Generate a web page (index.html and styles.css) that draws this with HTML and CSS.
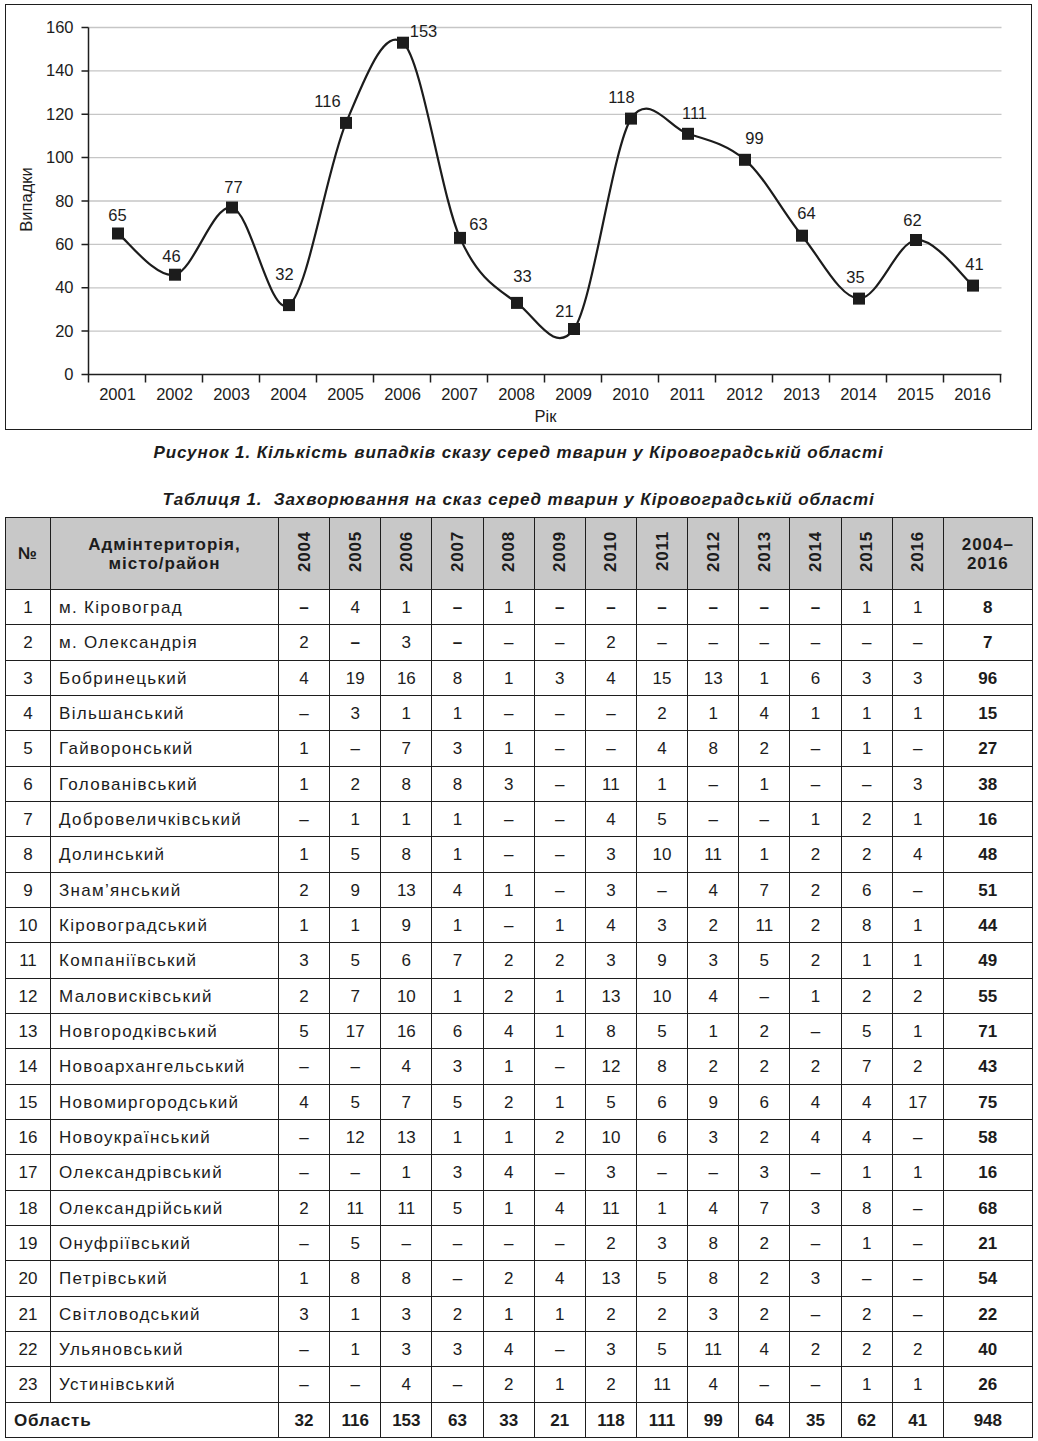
FILE: index.html
```html
<!DOCTYPE html>
<html lang="uk">
<head>
<meta charset="utf-8">
<title>Сказ серед тварин у Кіровоградській області</title>
<link rel="stylesheet" href="styles.css">
</head>
<body>
<div class="page">
  <div class="chart">
    <svg class="chart-svg" width="1023" height="422" viewBox="6.5 5.5 1023 422">
      <g class="grid">
        <line x1="89" y1="28" x2="1002" y2="28"/>
        <line x1="89" y1="71.4" x2="1002" y2="71.4"/>
        <line x1="89" y1="114.8" x2="1002" y2="114.8"/>
        <line x1="89" y1="158.1" x2="1002" y2="158.1"/>
        <line x1="89" y1="201.5" x2="1002" y2="201.5"/>
        <line x1="89" y1="244.9" x2="1002" y2="244.9"/>
        <line x1="89" y1="288.3" x2="1002" y2="288.3"/>
        <line x1="89" y1="331.6" x2="1002" y2="331.6"/>
      </g>
      <path class="axis" d="M89,28 V375 H1002 M82,28 H89 M82,71.4 H89 M82,114.8 H89 M82,158.1 H89 M82,201.5 H89 M82,244.9 H89 M82,288.3 H89 M82,331.6 H89 M82,375 H89 M89,375 V383 M146,375 V383 M203,375 V383 M260,375 V383 M317,375 V383 M374,375 V383 M431,375 V383 M488,375 V383 M545,375 V383 M602,375 V383 M659,375 V383 M716,375 V383 M773,375 V383 M830,375 V383 M887,375 V383 M944,375 V383 M1001,375 V383"/>
      <g class="ylab">
        <text x="74" y="33.5">160</text>
        <text x="74" y="76.9">140</text>
        <text x="74" y="120.3">120</text>
        <text x="74" y="163.6">100</text>
        <text x="74" y="207">80</text>
        <text x="74" y="250.4">60</text>
        <text x="74" y="293.8">40</text>
        <text x="74" y="337.1">20</text>
        <text x="74" y="380.5">0</text>
      </g>
      <g class="xlab">
        <text x="118" y="400">2001</text>
        <text x="175" y="400">2002</text>
        <text x="232" y="400">2003</text>
        <text x="289" y="400">2004</text>
        <text x="346" y="400">2005</text>
        <text x="403" y="400">2006</text>
        <text x="460" y="400">2007</text>
        <text x="517" y="400">2008</text>
        <text x="574" y="400">2009</text>
        <text x="631" y="400">2010</text>
        <text x="688" y="400">2011</text>
        <text x="745" y="400">2012</text>
        <text x="802" y="400">2013</text>
        <text x="859" y="400">2014</text>
        <text x="916" y="400">2015</text>
        <text x="973" y="400">2016</text>
      </g>
      <text class="axis-title" x="546" y="422">Рік</text>
      <text class="axis-title" transform="translate(32,200) rotate(-90)" x="0" y="0">Випадки</text>
      <path class="curve" d="M118.5,234 C128,240.87 156.5,279.53 175.5,275.2 C194.5,270.87 213.5,203.93 232.5,208 C251.5,212.07 270.5,318.7 289.5,305.6 C308.5,292.5 327.5,168.13 346.5,123.4 C365.5,78.67 384.5,27.03 403.5,43.2 C422.5,59.37 441.5,196.03 460.5,238.4 C479.5,280.77 498.5,289.22 517.5,303.4 C536.5,317.58 555.5,356.22 574.5,329.5 C593.5,302.78 612.5,150.63 631.5,119.1 C650.5,92 669.5,128.43 688.5,134.3 C707.5,140.17 726.5,144.32 745.5,160.3 C764.5,176.28 783.5,213.07 802.5,236.2 C821.5,259.33 840.5,298.38 859.5,299.1 C878.5,299.82 897.5,242.67 916.5,240.5 C935.5,238.33 964,278.5 973.5,286.1"/>
      <g class="marker">
        <rect x="112.5" y="228" width="12" height="12"/>
        <rect x="169.5" y="269.2" width="12" height="12"/>
        <rect x="226.5" y="202" width="12" height="12"/>
        <rect x="283.5" y="299.6" width="12" height="12"/>
        <rect x="340.5" y="117.4" width="12" height="12"/>
        <rect x="397.5" y="37.2" width="12" height="12"/>
        <rect x="454.5" y="232.4" width="12" height="12"/>
        <rect x="511.5" y="297.4" width="12" height="12"/>
        <rect x="568.5" y="323.5" width="12" height="12"/>
        <rect x="625.5" y="113.1" width="12" height="12"/>
        <rect x="682.5" y="128.3" width="12" height="12"/>
        <rect x="739.5" y="154.3" width="12" height="12"/>
        <rect x="796.5" y="230.2" width="12" height="12"/>
        <rect x="853.5" y="293.1" width="12" height="12"/>
        <rect x="910.5" y="234.5" width="12" height="12"/>
        <rect x="967.5" y="280.1" width="12" height="12"/>
      </g>
      <g class="vlab">
        <text x="118" y="221.5">65</text>
        <text x="172" y="262.5">46</text>
        <text x="234" y="193.5">77</text>
        <text x="285" y="280.5">32</text>
        <text x="328" y="107.5">116</text>
        <text x="424" y="37.5">153</text>
        <text x="479" y="230.5">63</text>
        <text x="523" y="282.5">33</text>
        <text x="565" y="317.5">21</text>
        <text x="622" y="103.5">118</text>
        <text x="695" y="119.5">111</text>
        <text x="755" y="144.5">99</text>
        <text x="807" y="219.5">64</text>
        <text x="856" y="283.5">35</text>
        <text x="913" y="226.5">62</text>
        <text x="975" y="270.5">41</text>
      </g>
    </svg>
  </div>

  <p class="fig-caption">Рисунок 1. Кількість випадків сказу серед тварин у Кіровоградській області</p>
  <p class="tbl-caption">Таблиця 1.&nbsp; Захворювання на сказ серед тварин у Кіровоградській області</p>

  <table class="data">
    <colgroup>
      <col class="c-n"><col class="c-name">
      <col class="c-y"><col class="c-y"><col class="c-y"><col class="c-y"><col class="c-y"><col class="c-y"><col class="c-y"><col class="c-y"><col class="c-y"><col class="c-y"><col class="c-y"><col class="c-y"><col class="c-y">
      <col class="c-tot">
    </colgroup>
    <thead>
      <tr>
        <th>№</th>
        <th>Адмінтериторія,<br>місто/район</th>
        <th class="yr"><span>2004</span></th>
        <th class="yr"><span>2005</span></th>
        <th class="yr"><span>2006</span></th>
        <th class="yr"><span>2007</span></th>
        <th class="yr"><span>2008</span></th>
        <th class="yr"><span>2009</span></th>
        <th class="yr"><span>2010</span></th>
        <th class="yr"><span>2011</span></th>
        <th class="yr"><span>2012</span></th>
        <th class="yr"><span>2013</span></th>
        <th class="yr"><span>2014</span></th>
        <th class="yr"><span>2015</span></th>
        <th class="yr"><span>2016</span></th>
        <th>2004–<br>2016</th>
      </tr>
    </thead>
    <tbody>
      <tr><td>1</td><td class="name">м. Кіровоград</td><td class="hd">–</td><td>4</td><td>1</td><td class="hd">–</td><td>1</td><td class="hd">–</td><td class="hd">–</td><td class="hd">–</td><td class="hd">–</td><td class="hd">–</td><td class="hd">–</td><td>1</td><td>1</td><td class="tot">8</td></tr>
      <tr><td>2</td><td class="name">м. Олександрія</td><td>2</td><td class="hd">–</td><td>3</td><td class="hd">–</td><td>–</td><td>–</td><td>2</td><td>–</td><td>–</td><td>–</td><td>–</td><td>–</td><td>–</td><td class="tot">7</td></tr>
      <tr><td>3</td><td class="name">Бобринецький</td><td>4</td><td>19</td><td>16</td><td>8</td><td>1</td><td>3</td><td>4</td><td>15</td><td>13</td><td>1</td><td>6</td><td>3</td><td>3</td><td class="tot">96</td></tr>
      <tr><td>4</td><td class="name">Вільшанський</td><td>–</td><td>3</td><td>1</td><td>1</td><td>–</td><td>–</td><td>–</td><td>2</td><td>1</td><td>4</td><td>1</td><td>1</td><td>1</td><td class="tot">15</td></tr>
      <tr><td>5</td><td class="name">Гайворонський</td><td>1</td><td>–</td><td>7</td><td>3</td><td>1</td><td>–</td><td>–</td><td>4</td><td>8</td><td>2</td><td>–</td><td>1</td><td>–</td><td class="tot">27</td></tr>
      <tr><td>6</td><td class="name">Голованівський</td><td>1</td><td>2</td><td>8</td><td>8</td><td>3</td><td>–</td><td>11</td><td>1</td><td>–</td><td>1</td><td>–</td><td>–</td><td>3</td><td class="tot">38</td></tr>
      <tr><td>7</td><td class="name">Добровеличківський</td><td>–</td><td>1</td><td>1</td><td>1</td><td>–</td><td>–</td><td>4</td><td>5</td><td>–</td><td>–</td><td>1</td><td>2</td><td>1</td><td class="tot">16</td></tr>
      <tr><td>8</td><td class="name">Долинський</td><td>1</td><td>5</td><td>8</td><td>1</td><td>–</td><td>–</td><td>3</td><td>10</td><td>11</td><td>1</td><td>2</td><td>2</td><td>4</td><td class="tot">48</td></tr>
      <tr><td>9</td><td class="name">Знам’янський</td><td>2</td><td>9</td><td>13</td><td>4</td><td>1</td><td>–</td><td>3</td><td>–</td><td>4</td><td>7</td><td>2</td><td>6</td><td>–</td><td class="tot">51</td></tr>
      <tr><td>10</td><td class="name">Кіровоградський</td><td>1</td><td>1</td><td>9</td><td>1</td><td>–</td><td>1</td><td>4</td><td>3</td><td>2</td><td>11</td><td>2</td><td>8</td><td>1</td><td class="tot">44</td></tr>
      <tr><td>11</td><td class="name">Компаніївський</td><td>3</td><td>5</td><td>6</td><td>7</td><td>2</td><td>2</td><td>3</td><td>9</td><td>3</td><td>5</td><td>2</td><td>1</td><td>1</td><td class="tot">49</td></tr>
      <tr><td>12</td><td class="name">Маловисківський</td><td>2</td><td>7</td><td>10</td><td>1</td><td>2</td><td>1</td><td>13</td><td>10</td><td>4</td><td>–</td><td>1</td><td>2</td><td>2</td><td class="tot">55</td></tr>
      <tr><td>13</td><td class="name">Новгородківський</td><td>5</td><td>17</td><td>16</td><td>6</td><td>4</td><td>1</td><td>8</td><td>5</td><td>1</td><td>2</td><td>–</td><td>5</td><td>1</td><td class="tot">71</td></tr>
      <tr><td>14</td><td class="name">Новоархангельський</td><td>–</td><td>–</td><td>4</td><td>3</td><td>1</td><td>–</td><td>12</td><td>8</td><td>2</td><td>2</td><td>2</td><td>7</td><td>2</td><td class="tot">43</td></tr>
      <tr><td>15</td><td class="name">Новомиргородський</td><td>4</td><td>5</td><td>7</td><td>5</td><td>2</td><td>1</td><td>5</td><td>6</td><td>9</td><td>6</td><td>4</td><td>4</td><td>17</td><td class="tot">75</td></tr>
      <tr><td>16</td><td class="name">Новоукраїнський</td><td>–</td><td>12</td><td>13</td><td>1</td><td>1</td><td>2</td><td>10</td><td>6</td><td>3</td><td>2</td><td>4</td><td>4</td><td>–</td><td class="tot">58</td></tr>
      <tr><td>17</td><td class="name">Олександрівський</td><td>–</td><td>–</td><td>1</td><td>3</td><td>4</td><td>–</td><td>3</td><td>–</td><td>–</td><td>3</td><td>–</td><td>1</td><td>1</td><td class="tot">16</td></tr>
      <tr><td>18</td><td class="name">Олександрійський</td><td>2</td><td>11</td><td>11</td><td>5</td><td>1</td><td>4</td><td>11</td><td>1</td><td>4</td><td>7</td><td>3</td><td>8</td><td>–</td><td class="tot">68</td></tr>
      <tr><td>19</td><td class="name">Онуфріївський</td><td>–</td><td>5</td><td>–</td><td>–</td><td>–</td><td>–</td><td>2</td><td>3</td><td>8</td><td>2</td><td>–</td><td>1</td><td>–</td><td class="tot">21</td></tr>
      <tr><td>20</td><td class="name">Петрівський</td><td>1</td><td>8</td><td>8</td><td>–</td><td>2</td><td>4</td><td>13</td><td>5</td><td>8</td><td>2</td><td>3</td><td>–</td><td>–</td><td class="tot">54</td></tr>
      <tr><td>21</td><td class="name">Світловодський</td><td>3</td><td>1</td><td>3</td><td>2</td><td>1</td><td>1</td><td>2</td><td>2</td><td>3</td><td>2</td><td>–</td><td>2</td><td>–</td><td class="tot">22</td></tr>
      <tr><td>22</td><td class="name">Ульяновський</td><td>–</td><td>1</td><td>3</td><td>3</td><td>4</td><td>–</td><td>3</td><td>5</td><td>11</td><td>4</td><td>2</td><td>2</td><td>2</td><td class="tot">40</td></tr>
      <tr><td>23</td><td class="name">Устинівський</td><td>–</td><td>–</td><td>4</td><td>–</td><td>2</td><td>1</td><td>2</td><td>11</td><td>4</td><td>–</td><td>–</td><td>1</td><td>1</td><td class="tot">26</td></tr>
      <tr class="sum"><td colspan="2" class="name region">Область</td><td>32</td><td>116</td><td>153</td><td>63</td><td>33</td><td>21</td><td>118</td><td>111</td><td>99</td><td>64</td><td>35</td><td>62</td><td>41</td><td class="tot">948</td></tr>
    </tbody>
  </table>
</div>
</body>
</html>
```
FILE: styles.css
```css
* { box-sizing: border-box; }

body {
  margin: 0;
  background: #fff;
  color: #1c1c1c;
  font-family: "Liberation Sans", Arial, sans-serif;
}

.page {
  width: 1038px;
  padding: 4px 6px 0 5px;
}

.chart {
  width: 1027px;
  height: 426px;
  border: 1.5px solid #1e1e1e;
}

.chart-svg { display: block; }

.grid line { stroke: #c6c6c6; stroke-width: 1.3; }
.axis { fill: none; stroke: #1e1e1e; stroke-width: 1.5; }
.curve { fill: none; stroke: #1c1c1c; stroke-width: 2.2; stroke-linejoin: round; }
.marker rect { fill: #1c1c1c; }

.ylab text,
.xlab text,
.vlab text,
.axis-title {
  font-family: "Liberation Sans", Arial, sans-serif;
  font-size: 16.5px;
  fill: #1c1c1c;
}
.ylab text { text-anchor: end; }
.xlab text, .vlab text, .axis-title { text-anchor: middle; }

.fig-caption,
.tbl-caption {
  margin: 0;
  width: 1027px;
  text-align: center;
  font-size: 17px;
  font-weight: bold;
  font-style: italic;
  line-height: 19px;
  letter-spacing: 0.9px;
}
.fig-caption { margin-top: 13px; }
.tbl-caption { margin-top: 28px; }

.data {
  margin-top: 8px;
  width: 1027px;
  border-collapse: collapse;
  table-layout: fixed;
  border: 1.5px solid #1e1e1e;
  font-size: 17px;
}
.c-n { width: 45px; }
.c-name { width: 228px; }
.c-y { width: 51.15px; }
.c-tot { width: 89px; }

.data th,
.data td {
  border: 1px solid #1e1e1e;
  padding: 0;
  text-align: center;
  vertical-align: middle;
}

.data thead th {
  height: 72px;
  background: #c8c8c8;
  font-weight: bold;
  line-height: 19px;
  letter-spacing: 1px;
}
.data th.yr span {
  display: inline-block;
  writing-mode: vertical-rl;
  transform: rotate(180deg);
  letter-spacing: 0.8px;
}

.data td {
  height: 35.33px;
  padding-top: 2px;
}
.data td.name {
  text-align: left;
  padding-left: 8px;
  letter-spacing: 1.3px;
}
.data td.hd { font-weight: bold; }
.data td.tot { font-weight: bold; }
.data tr.sum td { font-weight: bold; }
.data td.region { padding-left: 8px; letter-spacing: 0.8px; }
```
